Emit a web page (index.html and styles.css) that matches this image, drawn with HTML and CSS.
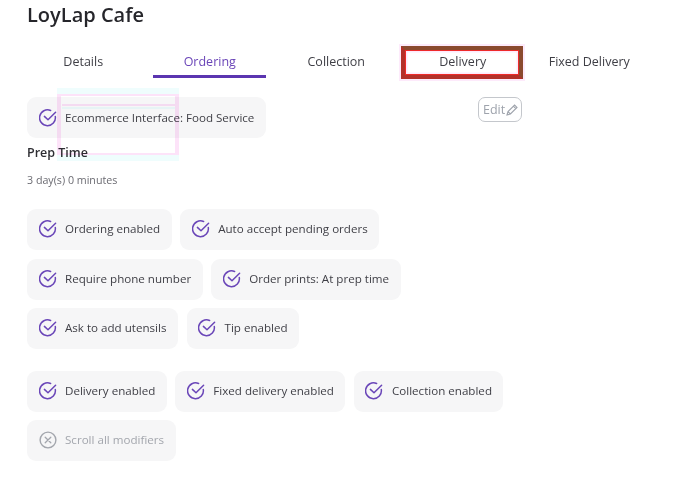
FILE: index.html
```html
<!DOCTYPE html>
<html lang="en">
<head>
<meta charset="utf-8">
<title>LoyLap Cafe</title>
<link rel="stylesheet" href="styles.css">
</head>
<body>
<svg class="defs" width="0" height="0" aria-hidden="true">
  <symbol id="chk" viewBox="0 0 18 18">
    <path d="M16.300 7.600A7.900 7.900 0 1 1 11.600 1.500" fill="none" stroke="currentColor" stroke-width="1.500" stroke-linecap="round"/>
    <path d="M5.400 7.400L9 10.800L16.600 3.200" fill="none" stroke="currentColor" stroke-width="1.500" stroke-linecap="round" stroke-linejoin="round"/>
  </symbol>
  <symbol id="crs" viewBox="0 0 18 18">
    <circle cx="9" cy="9" r="7.900" fill="none" stroke="currentColor" stroke-width="1.400"/>
    <path d="M6.200 6.200L11.800 11.800M11.800 6.200L6.200 11.800" fill="none" stroke="currentColor" stroke-width="1.300" stroke-linecap="round"/>
  </symbol>
</svg>
<main class="page">
  <h1 class="title">LoyLap Cafe</h1>
  <nav class="tabs">
    <a class="tab">Details</a>
    <a class="tab tab-active">Ordering</a>
    <a class="tab">Collection</a>
    <a class="tab tab-boxed">Delivery</a>
    <a class="tab">Fixed Delivery</a>
  </nav>
  <div class="top-row">
    <div class="chip"><svg class="ico"><use href="#chk"/></svg>Ecommerce Interface: Food Service</div>
    <button class="edit">Edit<svg class="pen" viewBox="0 0 14 14"><path d="M2 12L3 8.600L9.600 2L12 4.400L5.400 11ZM3 8.600L5.400 11M8.400 3.200L10.800 5.600" fill="none" stroke="currentColor" stroke-width="1.100"/></svg></button>
    <span class="ghost"></span>
  </div>
  <h2 class="label">Prep Time</h2>
  <p class="meta">3 day(s) 0 minutes</p>
  <div class="group">
    <div class="row">
      <div class="chip"><svg class="ico"><use href="#chk"/></svg>Ordering enabled</div>
      <div class="chip"><svg class="ico"><use href="#chk"/></svg>Auto accept pending orders</div>
    </div>
    <div class="row">
      <div class="chip"><svg class="ico"><use href="#chk"/></svg>Require phone number</div>
      <div class="chip"><svg class="ico"><use href="#chk"/></svg>Order prints: At prep time</div>
    </div>
    <div class="row">
      <div class="chip"><svg class="ico"><use href="#chk"/></svg>Ask to add utensils</div>
      <div class="chip"><svg class="ico"><use href="#chk"/></svg>Tip enabled</div>
    </div>
  </div>
  <div class="group group-last">
    <div class="row">
      <div class="chip"><svg class="ico"><use href="#chk"/></svg>Delivery enabled</div>
      <div class="chip"><svg class="ico"><use href="#chk"/></svg>Fixed delivery enabled</div>
      <div class="chip"><svg class="ico"><use href="#chk"/></svg>Collection enabled</div>
    </div>
    <div class="row">
      <div class="chip chip-off"><svg class="ico"><use href="#crs"/></svg>Scroll all modifiers</div>
    </div>
  </div>
</main>
</body>
</html>
```
FILE: styles.css
```css
* { box-sizing: border-box; }
html, body { margin: 0; background: #fff; }
body { font-family: "Open Sans", "Noto Sans", sans-serif; color: #3f3f46; font-size: 12.500px; }
.defs { position: absolute; }
.page { width: 688px; padding: 1px 0 0 27px; }
.title { margin: 0; font-size: 20px; line-height: 27px; font-weight: 600; color: #26262b; }
.tabs { display: flex; margin: 19px 0 0 -7px; width: 633px; }
.tab { flex: 0 0 126.500px; height: 30px; line-height: 30px; text-align: center; }
.tab-active { color: #6b46b8; position: relative; }
.tab-active::after { content: ""; position: absolute; left: 6px; right: 7px; bottom: -1px; height: 3px; background: #5b35b0; }
.tab-boxed { position: relative; }
.tab-boxed::after { content: ""; position: absolute; left: 1px; right: 3px; top: -1px; bottom: -2px; border: 4px solid; border-color: #8a4a2e #8a4a2e #b3302a #b3302a; box-shadow: 0 0 0 2px #fdeafb, inset 0 0 0 1px #ee2a2a, inset 0 0 0 2.500px #fdeafb; }
.top-row { position: relative; display: flex; justify-content: space-between; align-items: flex-start; width: 495px; margin-top: 20px; }
.ghost { position: absolute; left: 30px; top: -3px; width: 122px; height: 61px; border: solid #fde3f9; border-width: 2px 4px; box-shadow: 0 -6px 0 #effdfd, 0 6px 0 #effdfd; mix-blend-mode: multiply; pointer-events: none; }
.ghost::before { content: ""; position: absolute; left: 1px; right: 0; top: 8px; height: 2px; background: #fde3f9; box-shadow: 0 3px 0 #effdfd; }
.chip { display: inline-flex; align-items: center; height: 41px; padding: 0 11.500px 1px 11.500px; background: #f6f6f7; border-radius: 9px; white-space: nowrap; font-size: 11.600px; }
.ico { width: 18px; height: 18px; margin: 1px 8.500px 0 0; color: #6a46b8; flex: none; }
.group .chip { padding-bottom: 2px; }
.edit { display: inline-flex; align-items: center; width: 44px; height: 25px; padding: 0 0 0 4px; background: #fff; border: 1px solid #c4c7cc; border-radius: 7px; color: #9ea3ac; font: inherit; font-size: 12.500px; }
.pen { width: 14px; height: 14px; flex: none; }
.label { margin: 6px 0 0; font-size: 12.500px; line-height: 18px; font-weight: 600; color: #2e2e33; }
.meta { margin: 10px 0 0; font-size: 10.700px; line-height: 16px; color: #6b6b72; }
.group { display: flex; flex-direction: column; gap: 8.500px; margin-top: 21px; }
.group-last { margin-top: 22px; gap: 8px; }
.row { display: flex; gap: 8.500px; }
.chip-off { color: #a3a6ad; }
.chip-off .ico { color: #a3a6ad; }
```
